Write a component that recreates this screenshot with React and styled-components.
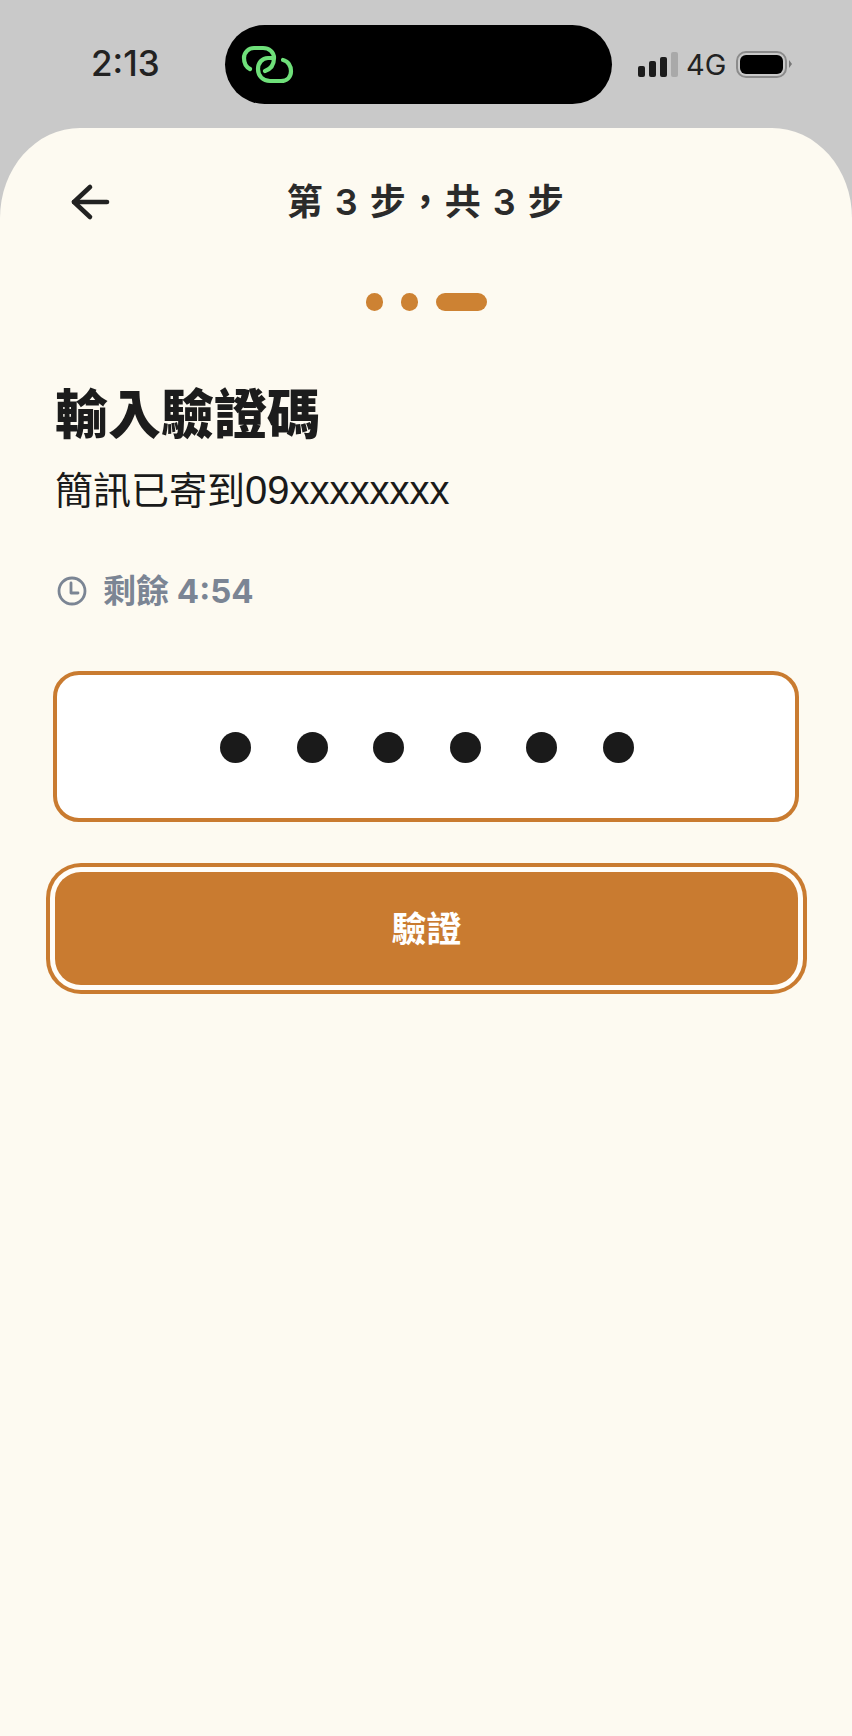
import styled, { createGlobalStyle } from 'styled-components'

const GlobalStyle = createGlobalStyle`
    html, body {
        margin: 0;
        padding: 0;
    }

    body {
        background: #c9c9c9;
        font-family: "Noto Sans CJK TC", "Liberation Sans", sans-serif;
    }
`

const Screen = styled.div`
    width: 852px;
    height: 1736px;
    display: flex;
    flex-direction: column;
    background: #c9c9c9;
    overflow: hidden;
`

const StatusBar = styled.div`
    height: 128px;
    flex: none;
    display: grid;
    grid-template-columns: 225px 387px 1fr;
    box-sizing: border-box;
    padding-top: 25px;
`

const Time = styled.div`
    padding: 18px 0 0 91px;
    font-family: Inter, sans-serif;
    font-size: 35px;
    line-height: 40px;
    font-weight: 550;
    color: #222;
`

const Island = styled.div`
    height: 79px;
    border-radius: 40px;
    background: #000;
    display: flex;
    align-items: center;
    padding-left: 7px;
`

const Indicators = styled.div`
    display: flex;
    align-items: flex-start;
    padding: 27px 0 0 26px;
`

const Signal = styled.div`
    display: flex;
    align-items: flex-end;
    gap: 4px;
    height: 25px;
`

const SignalBar = styled.span`
    width: 7px;
    height: ${props => props.$height}px;
    border-radius: 2px;
    background: ${props => (props.$off ? '#a9a9a9' : '#1b1b1b')};
`

const Network = styled.span`
    margin-left: 8px;
    font-family: Inter, sans-serif;
    font-size: 29px;
    line-height: 25px;
    font-weight: 400;
    color: #222;
`

const Battery = styled.div`
    position: relative;
    margin: -1px 0 0 10px;
    width: 51px;
    height: 27px;
    box-sizing: border-box;
    border: 2px solid #8b8b8b;
    border-radius: 10px;
    padding: 2px;

    &::after {
        content: '';
        position: absolute;
        right: -7px;
        top: 7px;
        border-left: 3px solid #777;
        border-top: 4px solid transparent;
        border-bottom: 4px solid transparent;
    }
`

const BatteryFill = styled.div`
    height: 100%;
    border-radius: 6px;
    background: #000;
`

const Sheet = styled.main`
    flex: 1;
    box-sizing: border-box;
    padding: 44px 53px 0;
    background: #fdfaf1;
    border-radius: 80px 80px 0 0 / 90px 90px 0 0;
`

const Header = styled.header`
    height: 60px;
    display: grid;
    grid-template-columns: 60px 1fr 60px;
    align-items: center;
`

const BackButton = styled.button`
    padding: 0 0 0 17px;
    border: none;
    background: none;
    color: #222;
    display: flex;
`

const Title = styled.h1`
    margin: 0;
    text-align: center;
    font-family: Inter, "Noto Sans CJK TC", sans-serif;
    font-size: 36px;
    line-height: 60px;
    font-weight: 600;
    letter-spacing: 1.5px;
    white-space: pre;
    color: #2b2b2b;
`

const Steps = styled.div`
    margin-top: 61px;
    padding-left: 1px;
    display: flex;
    justify-content: center;
    gap: 18px;
`

const Step = styled.span`
    width: ${props => (props.$active ? 51 : 17)}px;
    height: 18px;
    border-radius: 9px;
    background: #cd8233;
`

const Heading = styled.h2`
    margin: 70px 0 0 2px;
    font-size: 53px;
    line-height: 60px;
    font-weight: 900;
    color: #1c1c1c;
`

const Subtitle = styled.p`
    margin: 26px 0 0 2px;
    font-family: "Liberation Sans", "Noto Sans CJK TC", sans-serif;
    font-size: 38px;
    line-height: 46px;
    color: #1a1a1a;
`

const Phone = styled.span`
    font-size: 40px;
`

const Timer = styled.div`
    margin: 57px 0 0 4px;
    display: flex;
    align-items: center;
    gap: 16px;
    height: 40px;
    font-family: Inter, "Noto Sans CJK TC", sans-serif;
    font-size: 33px;
    font-weight: 700;
    color: #7b8594;
`

const TimerText = styled.span`
    padding-bottom: 4px;
`

const CodeBox = styled.div`
    margin-top: 60px;
    height: 151px;
    box-sizing: border-box;
    border: 4px solid #c97b30;
    border-radius: 26px;
    padding: 2px 0 0 2px;
    background: #fff;
    display: flex;
    align-items: center;
    justify-content: center;
    gap: 45.5px;
`

const CodeDot = styled.span`
    width: 31px;
    height: 31px;
    border-radius: 50%;
    background: #1a1a1a;
`

const VerifyButton = styled.button`
    display: block;
    margin: 50px 0 0 2px;
    width: 743px;
    height: 113px;
    padding: 0 0 4px;
    border: none;
    border-radius: 26px;
    background: #c97b30;
    box-shadow: 0 0 0 5px #fffdf8, 0 0 0 9px #c97b30;
    font-family: inherit;
    font-size: 35px;
    font-weight: 700;
    color: #fff;
`

const App = () => {
    return (
        <Screen>
            <GlobalStyle />
            <StatusBar>
                <Time>2:13</Time>
                <Island>
                    <svg width="70" height="56" viewBox="0 0 70 56" fill="none" stroke="#6fe07a" strokeWidth="4.2" strokeLinecap="round">
                        <path d="M18 32C14 30 12 26 12 21C12 15 17 11 22 11H31C37 11 42 15 42 21C42 27 39 32 33 34" />
                        <path d="M51 23C56 24 59 29 59 34C59 40 55 44 49 44H38C31 44 26 39 26 32C26 26 30 21 36 21H40" />
                    </svg>
                </Island>
                <Indicators>
                    <Signal>
                        <SignalBar $height={11} />
                        <SignalBar $height={16} />
                        <SignalBar $height={20} />
                        <SignalBar $height={25} $off />
                    </Signal>
                    <Network>4G</Network>
                    <Battery>
                        <BatteryFill />
                    </Battery>
                </Indicators>
            </StatusBar>
            <Sheet>
                <Header>
                    <BackButton aria-label="返回">
                        <svg width="40" height="38" viewBox="0 0 40 38" fill="none" stroke="currentColor" strokeWidth="4.6" strokeLinecap="round" strokeLinejoin="round">
                            <path d="M4 19H37" />
                            <path d="M20 4L4 19L20 34" />
                        </svg>
                    </BackButton>
                    <Title>第 3 步，共 3 步</Title>
                    <span />
                </Header>
                <Steps>
                    <Step />
                    <Step />
                    <Step $active />
                </Steps>
                <Heading>輸入驗證碼</Heading>
                <Subtitle>簡訊已寄到<Phone>09xxxxxxxx</Phone></Subtitle>
                <Timer>
                    <svg width="30" height="30" viewBox="0 0 30 30" fill="none" stroke="currentColor" strokeWidth="2.8" strokeLinecap="round" strokeLinejoin="round">
                        <circle cx="15" cy="15" r="13" />
                        <path d="M14 7V17H21" />
                    </svg>
                    <TimerText>剩餘 4:54</TimerText>
                </Timer>
                <CodeBox>
                    {[0, 1, 2, 3, 4, 5].map(i => (
                        <CodeDot key={i} />
                    ))}
                </CodeBox>
                <VerifyButton>驗證</VerifyButton>
            </Sheet>
        </Screen>
    )
}

export default App
